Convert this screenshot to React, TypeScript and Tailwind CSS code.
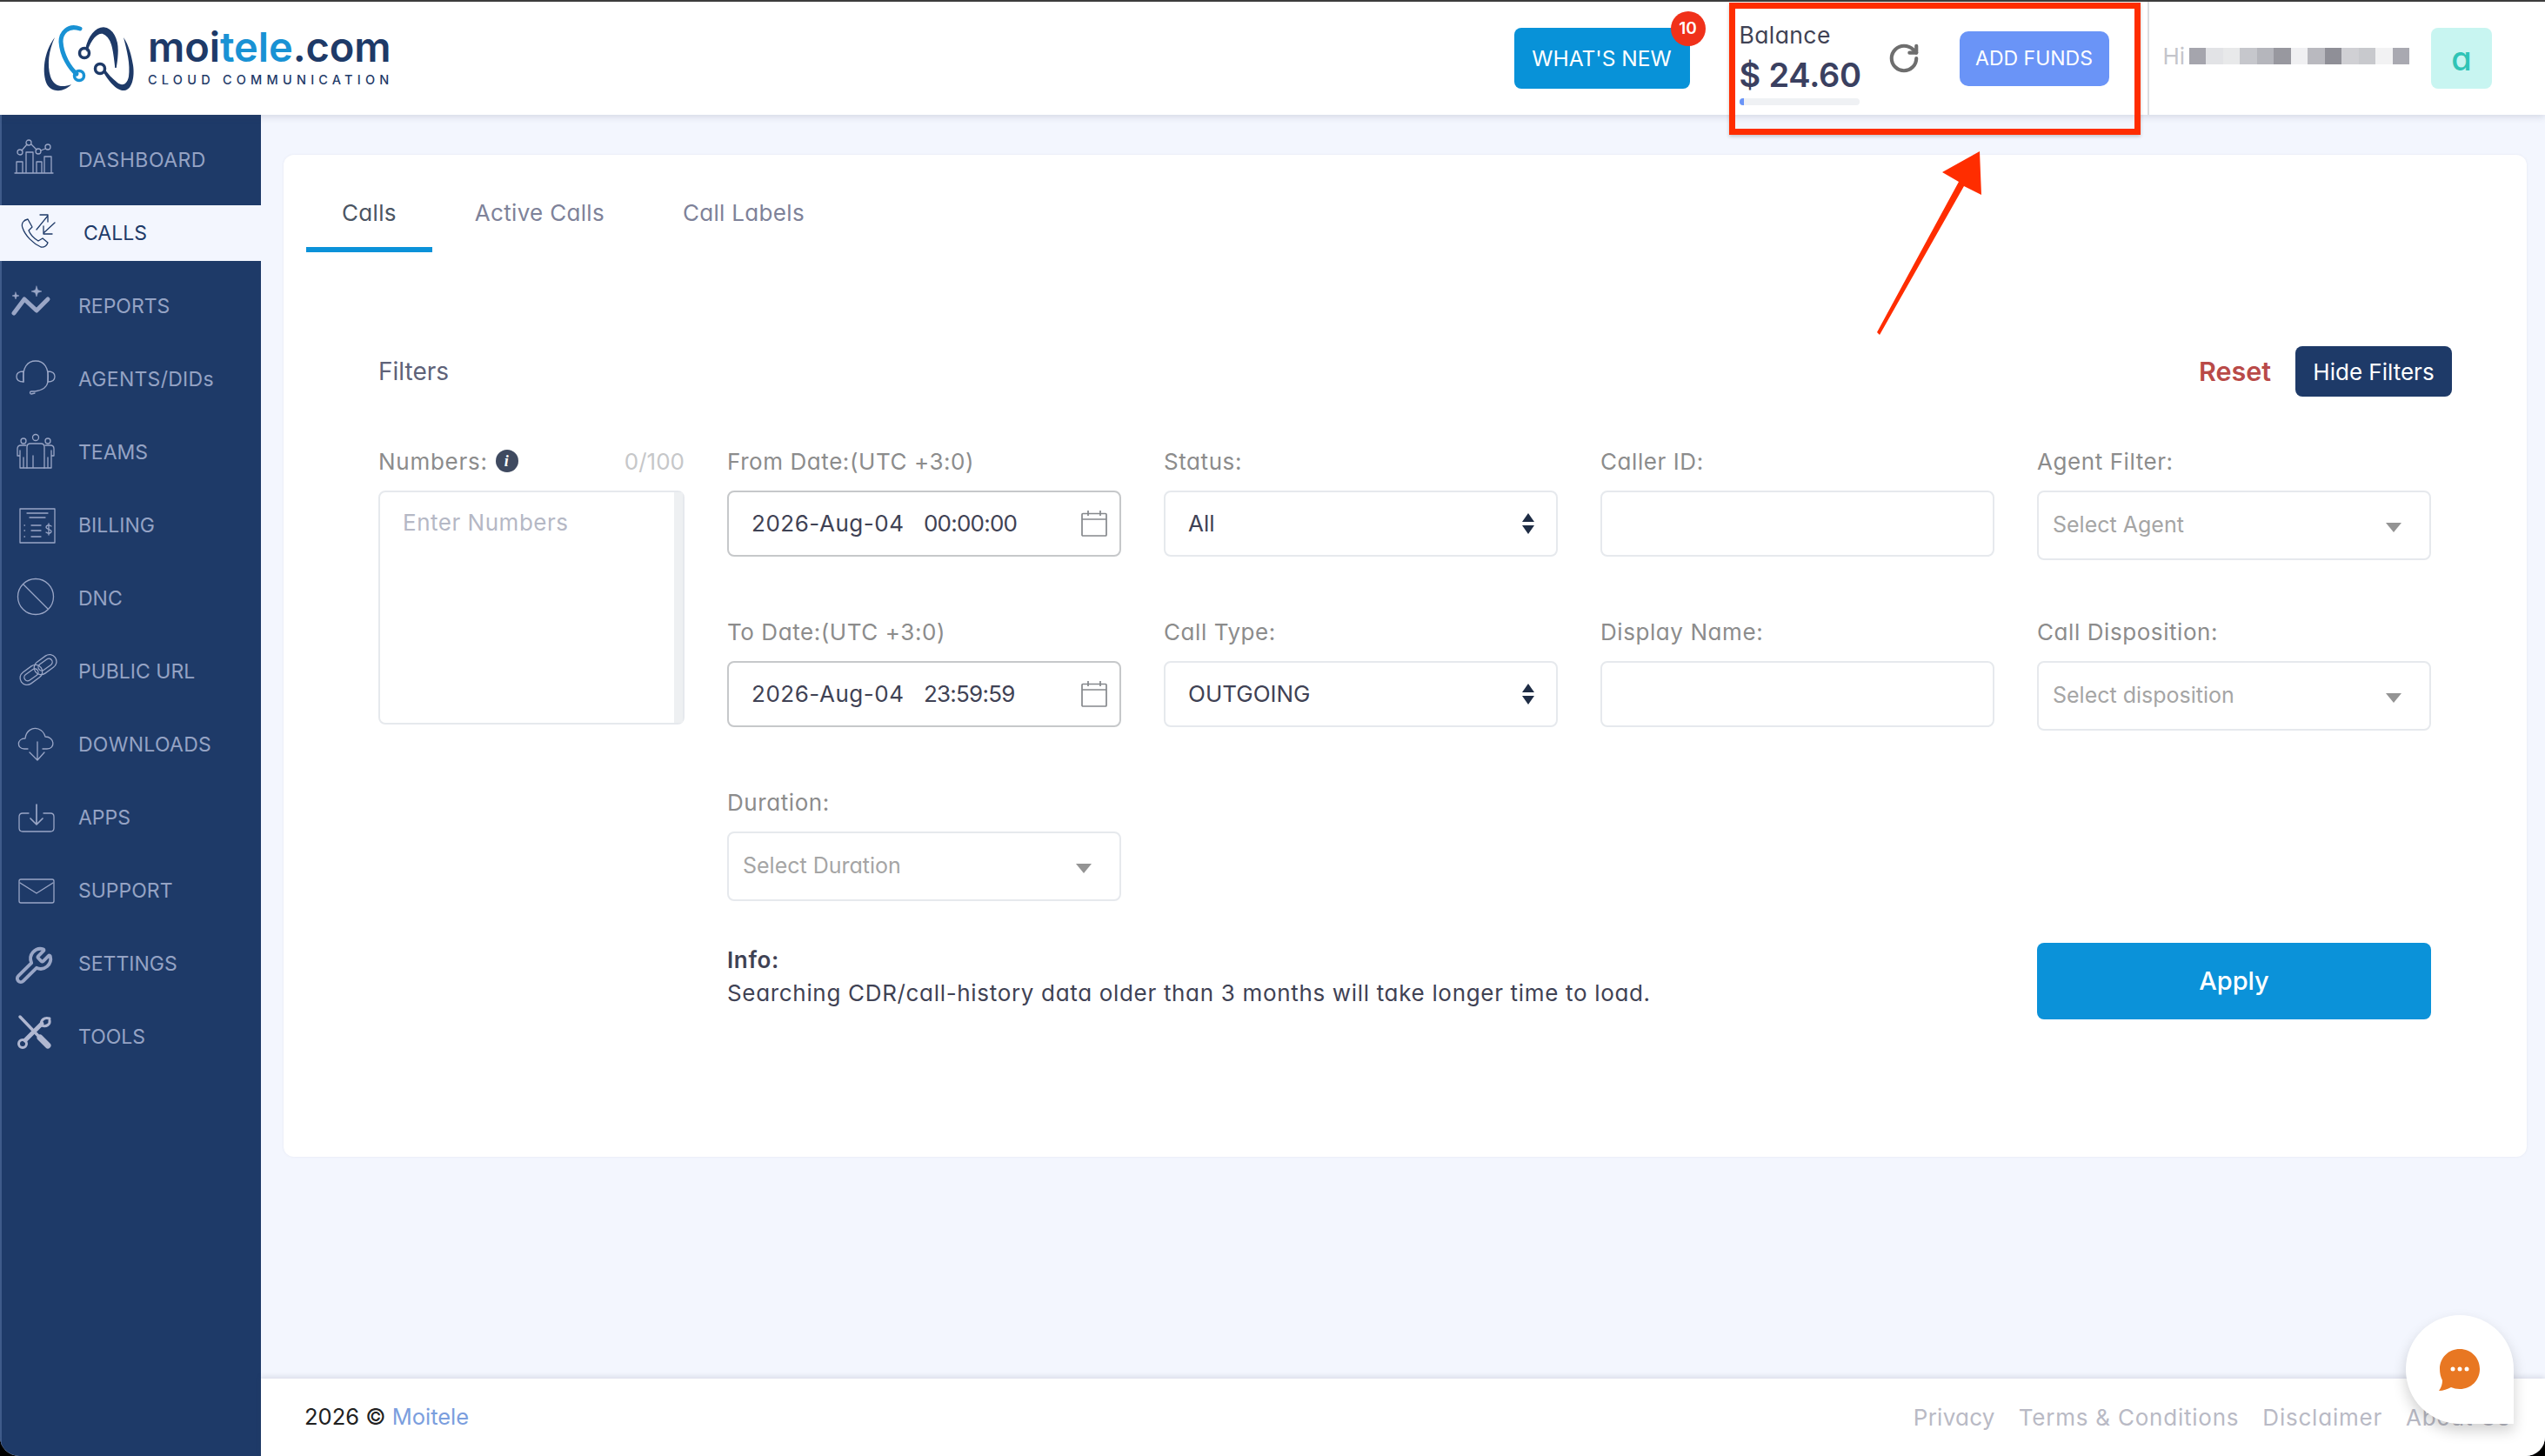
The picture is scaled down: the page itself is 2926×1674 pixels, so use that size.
import type { ReactNode } from 'react';
import { Wrench, RotateCw } from 'lucide-react';

const iconProps = { fill: 'none', stroke: '#9aa6c6', strokeWidth: 1.3, strokeLinecap: 'round' as const, strokeLinejoin: 'round' as const };

function Ico({ children }: { children: ReactNode }) {
  return (
    <svg viewBox="0 0 48 48" className="w-[48px] h-[48px] overflow-visible" {...iconProps}>
      {children}
    </svg>
  );
}

const menu: { label: string; wide?: boolean; icon: ReactNode }[] = [
  {
    label: 'REPORTS',
    icon: (
      <Ico>
        <path d="M0 32 L12 16 L26 29 L39 16" strokeWidth="5" />
        <path d="M2 8 L3 11 L6 12 L3 13 L2 16 L1 13 L-2 12 L1 11 Z" fill="#9aa6c6" strokeWidth="0.5" />
        <path d="M26 1 L27.5 5.5 L32 7 L27.5 8.5 L26 13 L24.500 8.500 L20 7 L24.500 5.500 Z" fill="#9aa6c6" strokeWidth="0.5" />
      </Ico>
    ),
  },
  {
    label: 'AGENTS/DIDs',
    wide: true,
    icon: (
      <Ico>
        <path d="M11 27 C9 10 16 3 25 3 C34 3 41 10 39 27" />
        <path d="M11 15 C5 15 3 18 3 21 C3 24 5 27 11 27 Z" />
        <path d="M39 15 C45 15 47 18 47 21 C47 24 45 27 39 27 Z" />
        <path d="M39 27 C38 34 31 37 24 38 L20 38 C18 38 18 41 20 41 L24 40" />
      </Ico>
    ),
  },
  {
    label: 'TEAMS',
    icon: (
      <Ico>
        <circle cx="25" cy="7" r="3.500" />
        <circle cx="11" cy="11" r="3" />
        <circle cx="39" cy="11" r="3" />
        <path d="M15 42 V18 Q15 14 19 14 H31 Q35 14 35 18 V42 M15 25 V42 H22 V28 V42 H35" />
        <path d="M14 16 H8 Q4 16 4 20 V28 H7 V42 H15 M7 28 V22 M11 42 V30" />
        <path d="M36 16 H42 Q46 16 46 20 V28 H43 V42 H35 M43 28 V22 M39 42 V30" />
      </Ico>
    ),
  },
  {
    label: 'BILLING',
    icon: (
      <Ico>
        <rect x="7" y="5" width="40" height="39" />
        <path d="M15 10 H39 M18 15 H36 M20 24 H31 M20 30 H31 M20 37 H31 M12 24 H12.500 M12 30 H12.500 M12 37 H12.500" />
        <path d="M43 25 C40 23 37 24 37 26 C37 29 43 28 43 31 C43 33 40 34 37 32 M40 22 V35" />
      </Ico>
    ),
  },
  {
    label: 'DNC',
    icon: (
      <Ico>
        <circle cx="25" cy="22" r="20.500" />
        <path d="M11 8 L39 36" />
      </Ico>
    ),
  },
  {
    label: 'PUBLIC URL',
    icon: (
      <Ico>
        <g transform="rotate(-36 28 22)">
          <rect x="4" y="14" width="28" height="16" rx="8" />
          <rect x="9" y="18" width="18" height="8" rx="4" />
          <rect x="24" y="14" width="28" height="16" rx="8" />
          <rect x="29" y="18" width="18" height="8" rx="4" />
        </g>
      </Ico>
    ),
  },
  {
    label: 'DOWNLOADS',
    wide: true,
    icon: (
      <Ico>
        <path d="M16 29 H12 C3 29 3 17 13 17 C14 8 21 4 28 6 C33 8 35 11 36 15 C47 15 48 29 38 29 H33" />
        <path d="M27 21 V41 M18 33 L27 42 L35 33" />
      </Ico>
    ),
  },
  {
    label: 'APPS',
    icon: (
      <Ico>
        <path d="M17 19 H10 Q6 19 6 23 V36 Q6 40 10 40 H42 Q46 40 46 36 V23 Q46 19 42 19 H34" />
        <path d="M26 9 V31 M19 25 L26 32 L33 25" strokeWidth="1.700" />
      </Ico>
    ),
  },
  {
    label: 'SUPPORT',
    icon: (
      <Ico>
        <rect x="6" y="11" width="40" height="27" rx="2" />
        <path d="M7 15 L26 27 L45 15" />
      </Ico>
    ),
  },
  {
    label: 'SETTINGS',
    icon: (
      <div className="w-[48px] h-[48px] flex items-center">
        <Wrench className="w-[46px] h-[46px] mt-[4px] text-[#9aa6c6]" strokeWidth={2} />
      </div>
    ),
  },
  {
    label: 'TOOLS',
    icon: (
      <svg viewBox="0 0 48 48" className="w-[48px] h-[48px] overflow-visible" fill="none" stroke="#b0b7d0" strokeLinecap="round">
        <path d="M7 1 L29 24" strokeWidth="3.500" />
        <path d="M30 25 L39 34" strokeWidth="7" />
        <path d="M32 9 L13 28" strokeWidth="5" />
        <circle cx="10" cy="32" r="4.500" strokeWidth="3" />
        <path d="M41 3 C35 1 30 5 32 11 C37 13 42 10 41 5" strokeWidth="3" />
      </svg>
    ),
  },
];

function Field({ label, children }: { label: string; children: ReactNode }) {
  return (
    <div className="flex flex-col">
      <div className="h-[40px] mb-[14px] flex items-center text-[26px] text-[#8c8c8c] tracking-[0.022em] whitespace-pre">{label}</div>
      {children}
    </div>
  );
}

function Calendar() {
  return (
    <svg viewBox="0 0 30 30" className="w-[30px] h-[30px]" fill="none" stroke="#85888c" strokeWidth="1.700">
      <rect x="1" y="3.500" width="28" height="25.500" rx="1" />
      <path d="M1 10 H29 M8 0 V6 M22 0 V6" />
    </svg>
  );
}

function DateInput({ date, time }: { date: string; time: string }) {
  return (
    <div className="h-[76px] border-2 border-[#c6c8ca] rounded-[8px] flex items-center pl-[26px] pr-[14px] text-[26px] text-[#3f4254] bg-white">
      <span className="w-[198px] whitespace-nowrap tracking-[0.02em] -mt-[2px]">{date}</span>
      <span className="whitespace-nowrap tracking-[-0.03em] -mt-[2px]">{time}</span>
      <span className="ml-auto flex"><Calendar /></span>
    </div>
  );
}

function SelectBox({ value }: { value: string }) {
  return (
    <div className="h-[76px] border-2 border-[#e6e9ed] rounded-[8px] flex items-center pl-[26px] pr-[24px] text-[26px] text-[#3f4254] bg-white">
      <span className="-mt-[2px]">{value}</span>
      <svg viewBox="0 0 16 26" className="ml-auto w-[16px] h-[26px]" fill="#1f2d45">
        <path d="M8 1 L15 11 H1 Z M8 25 L1 15 H15 Z" />
      </svg>
    </div>
  );
}

function TextBox() {
  return <div className="h-[76px] border-2 border-[#e6e9ed] rounded-[8px] bg-white" />;
}

function Placeholder({ text }: { text: string }) {
  return (
    <div className="h-[80px] border-2 border-[#e6e9ed] rounded-[8px] flex items-center pl-[16px] pr-[32px] text-[25px] text-[#a5a5a5] bg-white">
      <span>{text}</span>
      <span className="ml-auto w-0 h-0 border-l-[9px] border-r-[9px] border-t-[11px] border-l-transparent border-r-transparent border-t-[#949494] mt-[4px]" />
    </div>
  );
}

const blurBlocks = [
  'bg-[#a5a5ad]', 'bg-[#e2e3e6]', 'bg-[#e8e9ea]', 'bg-[#c6c7cc]', 'bg-[#b5b6bc]', 'bg-[#98989f]', 'bg-[#f0f0f2]',
  'bg-[#b9b9bf]', 'bg-[#8f8f97]', 'bg-[#d0d0d4]', 'bg-[#c8c9cd]', 'bg-[#f2f2f3]', 'bg-[#a9a9b1]',
];

export default function App() {
  return (
    <div className="relative w-[2926px] h-[1674px] bg-black overflow-hidden font-[Inter,sans-serif] [font-feature-settings:'cv11']">
      <div className="flex flex-col h-full rounded-b-[22px] overflow-hidden bg-[#f3f6fe]">
        {/* header */}
        <header className="relative z-10 h-[132px] flex-none bg-white border-t-2 border-[#3c3c3c] shadow-[0_2px_8px_rgba(60,70,100,0.18)] flex items-center">
          <div className="flex items-center pl-[40px] -mt-[4px]">
            <svg viewBox="40 20 120 90" className="w-[120px] h-[90px]">
              <path d="M63 43 C50 60 48 84 54 97 C60 107 74 106 82 97 C72 101 62 100 58 88 C54 74 56 58 63 43 Z" fill="#1e3a68" />
              <path d="M92 33 C78 28 70 38 70 48 C71 64 80 78 88 85" fill="none" stroke="#1992d4" strokeWidth="5" strokeLinecap="round" />
              <circle cx="91" cy="87" r="5.500" fill="none" stroke="#1992d4" strokeWidth="3.500" />
              <path d="M99 56 C102 42 110 32 119 32 C130 33 135 46 135 58 C135 65 134 72 133 78 C131 60 130 42 118 38 C111 37 104 46 100 58 Z" fill="#1e3a68" stroke="#1e3a68" strokeWidth="1.500" />
              <circle cx="97" cy="61" r="5.500" fill="none" stroke="#1e3a68" strokeWidth="3.500" />
              <circle cx="115" cy="79" r="5.500" fill="none" stroke="#1e3a68" strokeWidth="3.500" />
              <path d="M119 83 C124 92 134 105 143 104 C152 103 155 88 153 75 C151 63 148 52 142 43 C146 58 150 74 148 88 C146 98 140 99 135 95 C129 90 124 85 120 79 Z" fill="#1e3a68" />
            </svg>
            <div className="ml-[10px] flex flex-col">
              <div className="text-[47px] leading-[46px] font-semibold text-[#1e3a68] tracking-[-0.002em]">
                moi<span className="text-[#1992d4]">tele</span>.com
              </div>
              <div className="text-[14.5px] leading-[16px] mt-[7px] font-medium text-[#1e3a68] tracking-[0.36em] whitespace-nowrap">CLOUD COMMUNICATION</div>
            </div>
          </div>

          <div className="ml-auto flex items-center h-full">
            <div className="relative">
              <button className="w-[202px] h-[70px] rounded-[8px] bg-[#0892d8] text-white text-[24.500px] whitespace-nowrap">WHAT'S NEW</button>
              <span className="absolute -right-[18px] -top-[19px] w-[40px] h-[40px] rounded-full bg-[#f0311a] text-white text-[19px] font-semibold flex items-center justify-center">10</span>
            </div>
            <div className="ml-[57px] w-[138px] flex flex-col mt-[10px]">
              <div className="text-[26.500px] leading-[34px] text-[#3f4254] tracking-[0.015em]">Balance</div>
              <div className="text-[38px] leading-[58px] font-semibold text-[#3a4060] whitespace-nowrap tracking-[-0.005em]">$ 24.60</div>
              <div className="h-[8px] -mt-[2px] rounded-full bg-[#eff1f4] overflow-hidden">
                <div className="w-[5px] h-full bg-[#6a94f7]" />
              </div>
            </div>
            <RotateCw className="ml-[32px] w-[38px] h-[38px] text-[#6e6e6e]" strokeWidth={2.600} />
            <button className="ml-[45px] w-[172px] h-[63px] rounded-[10px] bg-[#6a94f7] text-white text-[23px] whitespace-nowrap">ADD FUNDS</button>
            <div className="ml-[44px] w-[2px] h-full bg-[#dcdde0]" />
            <div className="ml-[16px] flex items-center -mt-[6px]">
              <span className="w-[30px] text-[26px] text-[#c4c5cb]">Hi</span>
              {blurBlocks.map((c, i) => (
                <span key={i} className={`w-[19.500px] h-[19px] ${c}`} />
              ))}
            </div>
            <div className="ml-[25px] mr-[61px] w-[70px] h-[70px] rounded-[8px] bg-[#c8f5f1] flex items-center justify-center text-[38px] font-medium text-[#2fc4b6]">a</div>
          </div>
        </header>

        <div className="flex flex-1 min-h-0">
          {/* sidebar */}
          <aside className="w-[300px] flex-none bg-[#1e3a68] border-l-2 border-[#3f5b8a] flex flex-col text-[23px] text-[#95a3c4]">
            <div className="h-[104px] flex items-center flex-none tracking-[0.02em]">
              <div className="ml-[14px] mr-[26px] flex">
                <Ico>
                  <path d="M1 39 H45 M3 39 V26 H10 V39 M14 39 V15 H22 V39 M26 39 V26 H32 V39 M35 39 V20 H43 V39" />
                  <path d="M9 13 L15 6 M20 6 L26 12 M31 13 L36 11" />
                  <circle cx="7" cy="15" r="3" />
                  <circle cx="17" cy="4" r="3" />
                  <circle cx="28" cy="14" r="3" />
                  <circle cx="39" cy="9" r="3" />
                </Ico>
              </div>
              DASHBOARD
            </div>
            <div className="h-[64px] -ml-[2px] w-[300px] bg-[#f3f6fe] text-[#1e3a68] flex items-center flex-none">
              <div className="ml-[16px] mr-[32px] flex">
                <svg viewBox="0 0 48 48" className="w-[48px] h-[48px] overflow-visible" fill="none" stroke="#1e3a68" strokeWidth="1.300" strokeLinecap="round" strokeLinejoin="round">
                  <path d="M16 8 C11 9 8 13 10 18 C13 27 22 36 31 40 C35 41 38 38 39 35 L33 30 L28 33 C23 30 19 26 17 21 L21 17 Z" />
                  <path d="M26 20 L39 4 M30 3 H39 V11" />
                  <path d="M47 12 L34 24 M34 16 V25 H44" />
                </svg>
              </div>
              CALLS
            </div>
            <div className="mt-[10px] flex flex-col">
              {menu.map((m) => (
                <div key={m.label} className={m.wide ? 'h-[84px] flex items-center tracking-[0.012em]' : 'h-[84px] flex items-center'}>
                  <div className="ml-[14px] mr-[26px] flex">{m.icon}</div>
                  {m.label}
                </div>
              ))}
            </div>
          </aside>

          {/* content */}
          <div className="flex-1 flex flex-col min-w-0">
            <main className="flex-1 pl-[26px] pr-[21px] pt-[46px]">
              <div className="h-[1152px] rounded-[12px] bg-white shadow-[0_0_3px_rgba(60,70,100,0.08)] text-[#3f4254]">
                {/* tabs */}
                <div className="h-[112px] pl-[26px] flex gap-[8px] text-[26px] tracking-[0.012em] text-[#7e8299]">
                  <div className="h-full px-[41px] pt-[47px] border-b-[6px] border-[#0b92d9] text-[#4b5563]">Calls</div>
                  <div className="h-full px-[41px] pt-[47px]">Active Calls</div>
                  <div className="h-full px-[41px] pt-[47px]">Call Labels</div>
                </div>

                <div className="mt-[108px] pl-[109px] pr-[86px] flex items-center justify-between h-[58px]">
                  <span className="text-[28px] text-[#5e6278]">Filters</span>
                  <div className="flex items-center">
                    <span className="text-[30.500px] font-semibold text-[#b94a48] mr-[28px]">Reset</span>
                    <button className="w-[180px] h-[58px] rounded-[8px] bg-[#1e3a68] text-white text-[26px] whitespace-nowrap">Hide Filters</button>
                  </div>
                </div>

                <div className="mt-[54px] pl-[109px] flex">
                  {/* numbers */}
                  <div className="w-[352px] flex-none mr-[49px]">
                    <div className="h-[40px] mb-[14px] flex items-center text-[26px] text-[#8c8c8c] tracking-[0.028em]">
                      Numbers:
                      <span className="ml-[9px] w-[26px] h-[26px] rounded-full bg-[#3f4a60] text-white text-[18px] italic font-semibold font-[Liberation_Serif,serif] flex items-center justify-center">i</span>
                      <span className="ml-auto text-[#c6c7c9] tracking-normal">0/100</span>
                    </div>
                    <div className="h-[269px] border-2 border-[#e6e9ed] rounded-[8px] flex">
                      <div className="flex-1 pl-[26px] pt-[18px] text-[26px] leading-[34px] text-[#b5b8c5] tracking-[0.02em]">Enter Numbers</div>
                      <div className="w-[10px] bg-[#eef0f2]" />
                    </div>
                  </div>

                  {/* filters grid */}
                  <div className="w-[1960px] flex-none">
                    <div className="grid grid-cols-[453px_453px_453px_453px] gap-x-[49px] grid-rows-[196px_196px_134px]">
                      <Field label="From Date:(UTC +3:0)"><DateInput date="2026-Aug-04" time="00:00:00" /></Field>
                      <Field label="Status:"><SelectBox value="All" /></Field>
                      <Field label="Caller ID:"><TextBox /></Field>
                      <Field label="Agent Filter:"><Placeholder text="Select Agent" /></Field>

                      <Field label="To Date:(UTC +3:0)"><DateInput date="2026-Aug-04" time="23:59:59" /></Field>
                      <Field label="Call Type:"><SelectBox value="OUTGOING" /></Field>
                      <Field label="Display Name:"><TextBox /></Field>
                      <Field label="Call Disposition:"><Placeholder text="Select disposition" /></Field>

                      <Field label="Duration:"><Placeholder text="Select Duration" /></Field>
                    </div>

                    <div className="mt-[48px] flex justify-between">
                      <div className="text-[26px] leading-[40px] text-[#3f4254] tracking-[0.026em]">
                        <div className="font-semibold">Info:</div>
                        <div className="-mt-[2px]">Searching CDR/call-history data older than 3 months will take longer time to load.</div>
                      </div>
                      <button className="w-[453px] h-[88px] rounded-[8px] bg-[#0b92d9] text-white text-[29px] font-medium mr-[1px]">Apply</button>
                    </div>
                  </div>
                </div>
              </div>
            </main>

            {/* footer */}
            <footer className="h-[89px] flex-none bg-white shadow-[0_-2px_6px_rgba(60,70,100,0.15)] flex items-center pl-[50px] pr-[40px] text-[26px]">
              <span className="text-[#212121] text-[25.500px]">2026 © <span className="text-[#7b9ede]">Moitele</span></span>
              <div className="ml-auto flex gap-[27px] text-[#b9bac5] tracking-[0.03em]">
                <span className="tracking-[0.01em]">Privacy</span>
                <span>Terms &amp; Conditions</span>
                <span>Disclaimer</span>
                <span>About Us</span>
              </div>
            </footer>
          </div>
        </div>
      </div>

      {/* chat bubble */}
      <div className="absolute z-20 right-[36px] bottom-[37px] w-[124px] h-[125px] bg-white rounded-tl-full rounded-tr-full rounded-bl-full rounded-br-[20px] shadow-[0_8px_16px_rgba(0,0,0,0.18)] flex items-center justify-center">
        <svg viewBox="0 0 48 50" className="w-[48px] h-[50px]">
          <path d="M24 1 C37 1 47 11 47 24 C47 37 37 47 24 47 C20 47 17 46 14 45 C10 47 5 49 0 49 C3 45 4 41 4 37 C2 33 1 29 1 24 C1 11 11 1 24 1 Z" fill="#e87722" />
          <circle cx="16" cy="24" r="2.500" fill="#fff" />
          <circle cx="24" cy="24" r="2.500" fill="#fff" />
          <circle cx="32" cy="24" r="2.500" fill="#fff" />
        </svg>
      </div>

      {/* red annotation */}
      <div className="absolute z-20 left-[1988px] top-[3px] w-[473px] h-[152px] border-[7px] border-[#ff2d00] shadow-[0_2px_4px_rgba(0,0,0,0.2)]" />
      <svg viewBox="0 0 2926 1674" className="absolute z-20 left-0 top-0 w-[2926px] h-[1674px] pointer-events-none">
        <polygon points="2276,174 2233,198 2252,209 2158,382 2161,385 2258,214 2278,224" fill="#ff2d00" />
      </svg>
    </div>
  );
}
